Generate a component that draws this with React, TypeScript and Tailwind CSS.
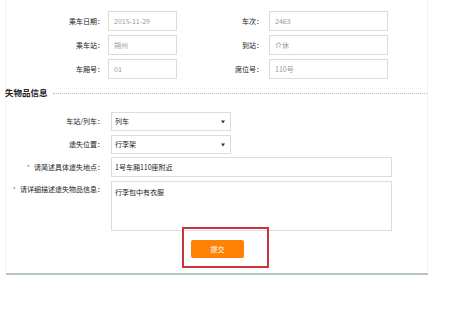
import React from "react";

const font = { fontFamily: '"Noto Sans CJK SC", "Noto Sans", sans-serif' };

function Field({ value, w, muted }: { value: string; w: string; muted?: boolean }) {
  return (
    <div
      className={`${w} h-[20px] border border-[#dcdcdc] bg-white flex items-center text-[7px] ${
        muted ? "text-[#9a9a9a] pl-[5px]" : "text-[#222] pl-[3px]"
      }`}
    >
      {value}
    </div>
  );
}

function Select({ value }: { value: string }) {
  return (
    <div className="w-[120px] h-[19px] border border-[#dcdcdc] bg-white flex items-center justify-between pl-[3px] pr-[5px] text-[7px] text-[#222]">
      <span>{value}</span>
      <svg width="4" height="4" viewBox="0 0 4 4">
        <path d="M0 0.5 L4 0.5 L2 3.5 Z" fill="#333" />
      </svg>
    </div>
  );
}

export default function App() {
  return (
    <div className="w-[465px] h-[310px] bg-white overflow-hidden" style={font}>
      <div className="ml-[5px] w-[423px] border-l border-r border-[#f3f3f3] pt-[11px]">
        {/* upper rows */}
        <div className="flex flex-col gap-[4px]">
          {[
            ["乘车日期：", "2015-11-29", "车次：", "2463"],
            ["乘车站：", "朔州", "到站：", "介休"],
            ["车厢号：", "01", "席位号：", "110号"],
          ].map((r) => (
            <div key={r[0]} className="flex items-center h-[20px]">
              <div className="w-[98px] text-right text-[7px] text-[#222]">{r[0]}</div>
              <div className="ml-[4px]">
                <Field value={r[1]} w="w-[69px]" muted />
              </div>
              <div className="w-[86px] text-right text-[7px] text-[#222]">{r[2]}</div>
              <div className="ml-[6px]">
                <Field value={r[3]} w="w-[119px]" muted />
              </div>
            </div>
          ))}
        </div>

        {/* section title */}
        <div className="flex items-center mt-[7px] h-[12px]">
          <span className="text-[8.5px] font-bold text-[#222] whitespace-nowrap -ml-[1px]">失物品信息</span>
          <div className="flex-1 ml-[5px] mt-[2px] border-t border-dotted border-[#bdbdbd]" />
        </div>

        {/* lower rows */}
        <div className="flex flex-col gap-[4px] mt-[14px]">
          <div className="flex items-center">
            <div className="w-[98px] text-right text-[7px] text-[#222]">车站/列车：</div>
            <div className="ml-[7px]">
              <Select value="列车" />
            </div>
          </div>
          <div className="flex items-center">
            <div className="w-[98px] text-right text-[7px] text-[#222]">遗失位置：</div>
            <div className="ml-[7px]">
              <Select value="行李架" />
            </div>
          </div>
          <div className="flex items-center -mt-[1px]">
            <div className="w-[98px] text-right text-[7px] text-[#222]">
              <span className="text-[#e05a5a] mr-[4px]">*</span>请简述具体遗失地点：
            </div>
            <div className="ml-[7px]">
              <Field value="1号车厢110座附近" w="w-[281px]" />
            </div>
          </div>
          <div className="flex items-start">
            <div className="w-[98px] text-right text-[7px] text-[#222] pt-[3px] whitespace-nowrap">
              <span className="text-[#e05a5a] mr-[4px]">*</span>请详细描述遗失物品信息：
            </div>
            <div className="ml-[7px] w-[281px] h-[50px] border border-[#dcdcdc] bg-white pl-[3px] pt-[5px] text-[7px] text-[#222]">
              行李包中有衣服
            </div>
          </div>
        </div>

        {/* submit */}
        <div className="flex pl-[185px] mt-[9px] pb-[15px]">
          <div className="relative">
            <div className="absolute left-[-9px] top-[-13px] w-[87px] h-[41px] border-2 border-[#c9333d]" />
            <button className="w-[53px] h-[18px] rounded-[2px] bg-[#ff8205] text-white text-[7px] flex items-center justify-center">
              提交
            </button>
          </div>
        </div>
      </div>
      <div className="ml-[6px] w-[422px] h-[2px] bg-[#b3c3c8]" />
    </div>
  );
}
